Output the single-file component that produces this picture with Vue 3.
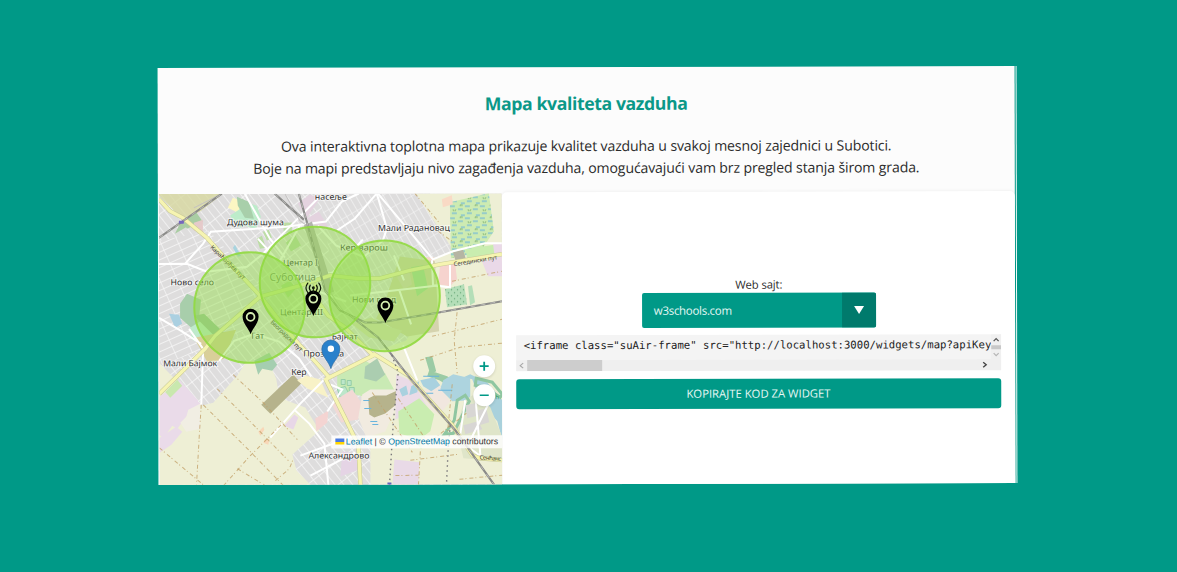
<script setup>
const zones = [
  { x: 249.5, y: 306.8 },
  { x: 315, y: 281.5 },
  { x: 384.5, y: 295.5 },
]
const pins = [
  { x: 250.5, y: 333.5 },
  { x: 313.3, y: 315.5 },
  { x: 385.3, y: 322.5 },
]
const labels = [
  { t: 'насеље', x: 315, y: 199.3, w: 32 },
  { t: 'Дудова шума', x: 227, y: 224.5, w: 57 },
  { t: 'Мали Радановац', x: 378, y: 230.5, w: 72 },
  { t: 'Кер варош', x: 340, y: 250, w: 48 },
  { t: 'Центар I', x: 283, y: 265, w: 35 },
  { t: 'Суботица', x: 269.5, y: 280, w: 46.5, big: true },
  { t: 'Ново село', x: 170.5, y: 284.5, w: 43.5 },
  { t: 'Центар III', x: 280, y: 314.5, w: 43 },
  { t: 'Нови град', x: 352, y: 302, w: 44 },
  { t: 'Гат', x: 251, y: 338, w: 13 },
  { t: 'Бајнат', x: 331.5, y: 339, w: 26 },
  { t: 'Прозивка', x: 303, y: 356, w: 41 },
  { t: 'Мали Бајмок', x: 163, y: 365.5, w: 54 },
  { t: 'Кер', x: 291, y: 374.5, w: 15.5 },
  { t: 'Александрово', x: 308, y: 458, w: 61 },
]
const majorRoads = [
  'M159 198l11 12 13 7 24 20 23 26 30 32 23 30 17 20 16 17 14 16',
  'M159 393l46-45 10-13 45-39 40-11 30-10 28 3h22l30-8 30-6 62-10',
  'M325 378l20 40 13 27 2 40',
  'M325 379l48-24-28-28-17-12-10-14 -3-18',
  'M373 353l35 22 17 20 27 30 20 30 7 3 23 2',
]
const rails = [
  'M159 237l63-44',
  'M275 193l14 13 15 13',
  'M299 193l9 32 17 65 15 20 25 12h15l60-10 62-11',
  'M350 315l28 22 32 41 45 52 39 55',
]
const tracks = [
  'M233 374l30 28 34 37 M217 388l35 35 36 37 M203 404l45 45 35 36',
  'M201 404l-2 30-3 51 M159 447l45 38 M223 485l25-28 22-22 15-15',
  'M237 468l28 17 M275 480l14-12 4-10',
  'M430 225l25 18 M415 193l24 29 M452 281l50-10 M432 336l25-6 45-11 M457 312l-3 28 3 33',
  'M420 360l40-13 42-4 M410 460l48-6 M420 451l-2 34 M395 475h23 M459 479l43-4 M452 384l-5 50 M372 392l40 60 M398 398l30 45 38-30',
]
const minor = [
  'M159 263h28l20 8 40-5 15-12 25-25 32-32',
  'M185 263l18-20 8-12 75-5 40-5 16-20 17-8',
  'M245 193l25 45 15 19 M258 238l18 20',
  'M159 317l22 13 20 13 M189 328l14 20-2 56',
  'M377 193l10 35-4 12-21 18 M377 193l-22 25-18 12',
  'M378 193l55 66 20-8 32-8h17 M432 260l1 25 17 2V263',
  'M394 255l10 25 M399 289l12 35 M350 295l90-10',
  'M219 360l15-20 20-7 25 8 20 17 12 18',
  'M295 410l14 13 15 20 4 42 M325 378l-25 25-30 34 M330 384l12 5-15 22',
  'M403 345l14 35 M300 455l55-20 M310 475l45-23',
  'M465 400l-6 40 20 15 M475 395l5 60 M490 400l-20 40',
  'M300 225l-20 35 23 20 30-8 30-33 M318 225l18 20 29 12 M291 310l25-20 30 11',
]
</script>

<template>
  <main class="page">
    <section class="card">
      <header class="intro">
        <h1>Mapa kvaliteta vazduha</h1>
        <p class="first">Ova interaktivna toplotna mapa prikazuje kvalitet vazduha u svakoj mesnoj zajednici u Subotici.</p>
        <p class="second">Boje na mapi predstavljaju nivo zagađenja vazduha, omogućavajući vam brz pregled stanja širom grada.</p>
      </header>
      <div class="content">
        <div class="map">
          <svg class="tiles" viewBox="159 193 343 292" preserveAspectRatio="none">
            <defs>
              <pattern id="st1" width="7" height="19" patternUnits="userSpaceOnUse" patternTransform="rotate(-38)">
                <path d="M0 0H7M0 0V19" stroke="#fff" stroke-width="1.4" stroke-opacity=".8" fill="none" />
              </pattern>
              <pattern id="st2" width="16" height="7" patternUnits="userSpaceOnUse" patternTransform="rotate(-24)">
                <path d="M0 0H16M0 0V7" stroke="#fff" stroke-width="1.3" stroke-opacity=".8" fill="none" />
              </pattern>
              <pattern id="st3" width="6" height="15" patternUnits="userSpaceOnUse" patternTransform="rotate(-30)">
                <path d="M0 0H6M0 0V15" stroke="#fff" stroke-width="1.2" stroke-opacity=".75" fill="none" />
              </pattern>
              <pattern id="trees" width="6" height="6" patternUnits="userSpaceOnUse">
                <circle cx="1.5" cy="1.5" r=".7" fill="#68a878" /><circle cx="4.5" cy="4.5" r=".7" fill="#68a878" />
              </pattern>
              <pattern id="marsh" width="15" height="12" patternUnits="userSpaceOnUse">
                <path d="M0 2h5M8 5h5M2 9h5M11 11h4" stroke="#5faee0" stroke-width="1" />
                <path d="M10 2l1-2M12 2v-2M4 7l-1-2M5 7l1-2" stroke="#76a968" stroke-width=".8" />
              </pattern>
            </defs>
            <rect x="159" y="193" width="343" height="292" fill="#dedddd" />
            <rect x="159" y="193" width="343" height="292" fill="url(#st1)" />
            <path d="M320 193h110l30 60-25 10-5 70-50-15-50-60z" fill="#dedddd" />
            <path d="M320 193h110l30 60-25 10-5 70-50-15-50-60z" fill="url(#st3)" />
            <path d="M159 240l50-10 60 65-30 40-80 30z" fill="#dedddd" />
            <path d="M159 240l50-10 60 65-30 40-80 30z" fill="url(#st2)" />

            <path d="M159 362l42 43 12-3 24-27 9-14 22-1 8 18 3 19 26 10 14 23-27 24 4 16 15 15H159z" fill="#eeefd5" />
            <path d="M416 193l38 58-21 7-2 43-25 39-34 12-17 18 7 30 8 16v69h132V193z" fill="#eeefd5" />
            <path d="M159 193h64l-23 18-18 7-23-24z" fill="#d7d8a0" opacity=".8" />
            <path d="M182 220l14-9 7 10-16 7zM187 226l-12 7 6-12z" fill="#a9cda3" />
            <path d="M194 222l9-3v13l-9-2z" fill="#e5caca" />
            <path d="M228 207l5-10 11 4-4 12z" fill="#fcf7c3" />
            <path d="M230 215l9-6 6-8 12 4 4 11-5 12-11-3-5 2z" fill="#bdecca" />
            <path d="M237 196l12 5 5 17-9-1-7-12z" fill="#a8cfaa" />
            <path d="M257 238l5-3 4 12-6 1zM263 231l6-2 3 8-5 3zM283 222h9v10h-8z" fill="#bcdda5" />
            <path d="M298 203l12-9 10 4-8 12-5 8zM307 218l12-7 9 15-6 3z" fill="#e4d3df" />
            <path d="M235 244l6 11-3 1-5-9z" fill="#a8d4df" />

            <path d="M180 303l7-10 14 6-2 17 8 14-8 4-19-17z" fill="#a8ceab" />
            <path d="M190 327l14-9 13 20-8 9-17-8z" fill="#bfeacb" />
            <path d="M169 313l10 1 3 9-7 4z" fill="#abd0e1" />
            <path d="M194 315l10-2 24 23-12 1z" fill="#9cc39c" />
            <path d="M194 337l42-8-12 29-16 5z" fill="#d9cf99" />

            <path d="M177 379l23 24-14 10-14-12z" fill="#eadbe9" />
            <path d="M172 398l-7-6 12-10 8 8z" fill="#c9e8ae" />
            <path d="M159 396l21-16 18 20-21 28-5-3-9 12-4-3z M159 437l17-11 6 5-11 13-12 8z" fill="#eadbe9" />
            <path d="M165 391l12-12 5 6-12 12z" fill="#c9e8ae" />
            <path d="M188 409l12-6v25l-14 3-6-9 6-6z" fill="#f1eee3" />
            <path d="M293 374l8 9-31 30-9-9z" fill="#b6b38c" />
            <path d="M254 360l15-8 8 12-5 6-10-2-4 6z" fill="#a5ceb0" />
            <path d="M298 417l-5 12-9-4 10-11z" fill="#e8d7e7" />
            <path d="M258 431l5-5 1 3-4 6zM264 439l5-1-1 6-5-2z" fill="#f8d7b8" />
            <path d="M328 397l-21-9-10-8 8-5 15 4z" fill="#f8f2c7" />
            <path d="M315 418l13-8-1 12-11 9z" fill="#f4d4d2" />

            <path d="M337 375l25-17 23 15 11 20-13 7-24-5-22-5z" fill="#c9eab4" />
            <path d="M365 366l12-8 8 16-9 7-12-3z" fill="#abcdb0" />
            <path d="M337 388l8-2 4 8-9 3zM347 380h4v5h-4zM349 387h5v6h-5zM341 379h4v5h-4z" fill="#bde6ca" stroke="#89c7a2" stroke-width=".8" />
            <path d="M336 399l16-10 9 13-3 17-17 3-9-17z" fill="#f2d9d5" />
            <path d="M362 394l8-5 27 0-1 17-11 25-19 6-8-20z" fill="#f1ebe0" />
            <path d="M368 398l6-3 12 0 11-5-1 14-11 9-11 4-5-3z" fill="#b6b38c" />
            <path d="M396 374l17 7 17 31-17-1-18 8z" fill="#eadbe7" />
            <path d="M398 411l21-13 15 16-4 17-8 6-1 12-10-12-12-4z" fill="#c9edb0" />
            <path d="M419 393l19-10 12 18-11 14-10-7z" fill="#f1e7df" />
            <path d="M394 459l25 3-1 23h-26z" fill="#e9dae7" />
            <path d="M342 451l14 2 3 16-19 7z" fill="#e5d4e5" />

            <path d="M450 202l39-9 5 38-14 21-29 6z" fill="#cdebb2" />
            <path d="M450 202l39-9 5 38-14 21-29 6z" fill="url(#marsh)" />
            <path d="M453 252l10-3 3 10-10 3z" fill="#b5b5a3" />
            <path d="M466 249l31-5-1 11-29 4z" fill="#c9edaf" />
            <path d="M493 243h9v33h-14l-6-15 13-2z" fill="#ead9e8" />
            <path d="M440 266l15-4 2 17-7 7-12-2z" fill="#f6d3ce" />
            <path d="M426 257h8v28h-7z" fill="#f4d9cc" />
            <path d="M445 289l19-5 3 20-20 3z" fill="#b4deb8" />
            <path d="M445 289l19-5 3 20-20 3z" fill="url(#trees)" />
            <path d="M468 286l4-1 3 17-5 3z" fill="#b4deb8" />
            <path d="M442 199l10-4 1 9-10 3z" fill="#f9dac5" />

            <path d="M400 256l35 5 4 70-32 5-31-18 10-20z" fill="#d5d3ae" />
            <path d="M411 267l12-2 5 23-11 8z" fill="#a8d8a0" />
            <path d="M397 277l12-7 3 14-8 5z" fill="#dcd2c0" />
            <path d="M351 323l20-6 20 10 11 3-8 11-25-4z" fill="#d8dcb8" />
            <path d="M281 285l9-5 6 8-8 9zM286 242l9-8 6 11-10 6z" fill="#b9d6a8" />

            <path d="M425 357l7-1 4 15-6 3zM429 370l18 6 11 8-4 5-15-9-12-4z" fill="#9bcba5" />
            <path d="M448 388l15-11 9 2 8 22 17 20 5 19V400l-15-18-17-8-20 9-10 3z" fill="#a9d1dc" />
            <path d="M443 380l10-6 17 4v22l-18 1-12-12z" fill="#add4df" />
            <path d="M420 380l14-3 6 8-9 6-8-5z M399 389l7-4 2 9-6 2z M411 386l8-5-2 11-8 3z" fill="#a9d1df" />
            <path d="M456 428l4-14 4-14 12-7 14 14 12 30v24l-39-3z" fill="#dfe5c9" />
            <path d="M457 400l8-5 4 6-8 16-8 16-9 1 10-14zM476 378l16 4 10 12-2 3-16-10-9-2z" fill="none" stroke="#8fc6a1" stroke-width="3" />
            <path d="M465 405l10-2 4 12-12 3zM478 410l8-2 3 14-10 3zM463 425l15-4 4 8-17 5z" fill="#d8d6d4" />
            <path d="M423 376h16M438 390h14M421 393h12M363 400h6M364 408h7M370 421h7M372 424h6" stroke="#68b4dd" stroke-width="1" />

            <path v-for="(d, i) in minor" :key="'m' + i" :d="d" fill="none" stroke="#fff" stroke-width="2" />
            <path d="M194 207l28-14M285 193l15 27 7 5 20 62 18 26" fill="none" stroke="#c3c1c1" stroke-width="1" />
            <path d="M304 225l8-4 10 32 12 38-7 3z" fill="#b3b3ae" />
            <path v-for="(d, i) in tracks" :key="'t' + i" :d="d" fill="none" stroke="#c3a169" stroke-width="1" stroke-dasharray="4 2 1 3" opacity=".8" />
            <path v-for="(d, i) in majorRoads" :key="'c' + i" :d="d" fill="none" stroke="#c9ca98" stroke-width="4.4" />
            <path v-for="(d, i) in majorRoads" :key="'y' + i" :d="d" fill="none" stroke="#f6f4b1" stroke-width="3.3" />
            <path v-for="(d, i) in rails" :key="'r' + i" :d="d" fill="none" stroke="#8b8b89" stroke-width="2.1" />
            <path v-for="(d, i) in rails" :key="'d' + i" :d="d" fill="none" stroke="#cececa" stroke-width=".7" stroke-dasharray="5 5" />
            <path d="M390 350l8 22-5 50-4 63M450 425l-2 20-2 40" fill="none" stroke="#79777b" stroke-width="1.4" stroke-dasharray="1.5 3.5" />
            <rect x="179" y="220" width="5" height="3" fill="#7566be" /><rect x="387" y="482" width="4" height="3" fill="#6161ba" />

            <g class="road-text">
              <text x="454" y="266" textLength="44" transform="rotate(-9 454 266)">Сегедински пут</text>
              <text x="210" y="247" textLength="46" transform="rotate(44 210 247)">Карађорђев пут</text>
              <text x="270" y="322" textLength="42" transform="rotate(44 270 322)">Београдски пут</text>
              <text x="479" y="459" textLength="22" transform="rotate(5 479 459)">Сенћанс</text>
              <text x="495" y="399" fill="#2c965b">h</text>
            </g>
            <text v-for="l in labels" :key="l.t" :x="l.x" :y="l.y" :textLength="l.w" lengthAdjust="spacingAndGlyphs" class="place" :class="{ big: l.big }">{{ l.t }}</text>
            <circle v-for="(z, i) in zones" :key="'z' + i" :cx="z.x" :cy="z.y" r="55.3" fill="#92df45" fill-opacity=".46" stroke="#91d940" stroke-width="2" stroke-opacity=".9" />

            <g v-for="(p, i) in pins" :key="'p' + i" :transform="`translate(${p.x} ${p.y})`">
              <path d="M0 0C-2-6-8-11-8-17.5a8 8 0 0 1 16 0C8-11 2-6 0 0z" fill="#000" />
              <circle cy="-17.3" r="3.9" fill="none" stroke="#d4edaf" stroke-width="1.8" />
            </g>
            <g fill="none" stroke="#10190a" stroke-width="1.2" stroke-linecap="round">
              <circle cx="313.3" cy="287.2" r="1.5" fill="#10190a" stroke="none" />
              <path d="M310.3 284.6q-2 2.8 0 5.5M316.3 284.6q2 2.8 0 5.5M307.8 282.5q-3.7 4.8 0 9.5M318.8 282.5q3.7 4.8 0 9.5M313.3 289v3" />
            </g>
            <path d="M330.7 368C328.7 361 321.7 356 321.7 348.5a9 9 0 0 1 18 0C339.7 356 332.7 361 330.7 368z" fill="#2a81cb" stroke="#326fa6" stroke-width=".8" />
            <circle cx="330.7" cy="348.2" r="3.2" fill="#fff" />
          </svg>
          <div class="zoom-buttons">
            <button aria-label="+"><svg width="22" height="22"><path d="M6.500 11h9M11 6.500v9" stroke="#009987" stroke-width="1.8" /></svg></button>
            <button aria-label="−"><svg width="22" height="22"><path d="M6.500 11h9" stroke="#009987" stroke-width="1.6" /></svg></button>
          </div>
          <div class="credits"><i class="flag"></i><a>Leaflet</a> | © <a>OpenStreetMap</a> contributors</div>
        </div>
        <div class="panel">
          <label>Web sajt:</label>
          <div class="select"><span>w3schools.com</span><b><svg width="10" height="9"><path d="M0 .5h10L5 8.5z" fill="#fff" /></svg></b></div>
          <div class="code">
            <code>&lt;iframe class="suAir-frame" src="http://localhost:3000/widgets/map?apiKey</code>
            <div class="vbar">
              <svg width="10" height="25" fill="none">
                <path d="M2.500 7l2.500-2.500L7.500 7" stroke="#555" stroke-width="1.3" />
                <path d="M0 11h10v4H0z" fill="#c8c8c8" />
                <path d="M2.500 19L5 21.500 7.500 19" stroke="#b5b5b5" stroke-width="1.2" />
              </svg>
            </div>
            <div class="hbar">
              <svg width="11" height="11" fill="none"><path d="M7 3L4 5.500 7 8" stroke="#a8a8a8" stroke-width="1.2" /></svg>
              <i></i>
              <svg class="right" width="11" height="11" fill="none"><path d="M4 3l3 2.500L4 8" stroke="#444" stroke-width="1.4" /></svg>
            </div>
          </div>
          <button class="copy">KOPIRAJTE KOD ZA WIDGET</button>
        </div>
      </div>
    </section>
  </main>
</template>

<style>
body { background: #009987; overflow: hidden; }
</style>

<style scoped>
.page { box-sizing: border-box; width: 1177px; height: 572px; padding: 67px 0 0 158px; background: #009987; font-family: "Open Sans", "Noto Sans", sans-serif; color: #2b2b2b; }
.card { position: relative; width: 857px; height: 417px; background: #fcfcfc; transform: rotate(-.12deg); }
.card::after { content: ""; position: absolute; left: 858px; top: 0; width: 1px; height: 417px; background: #effaf8; }
.intro { height: 125.5px; text-align: center; box-sizing: border-box; padding-top: 23px; }
h1 { margin: 0; font-size: 17.7px; line-height: 26px; font-weight: 700; color: #0b9888; letter-spacing: -.42px; }
p { margin: 0; font-size: 14.1px; line-height: 22px; white-space: nowrap; }
.first { margin-top: 18.5px; letter-spacing: -.135px; }
.second { letter-spacing: -.135px; }
.content { display: flex; height: 291.5px; }
.map { position: relative; width: 343px; margin-left: .5px; height: 291.5px; overflow: hidden; flex: none; }
.tiles { display: block; width: 343px; height: 292px; }
.place { font: 8.5px "Noto Sans", sans-serif; fill: #303030; stroke: #fff; stroke-opacity: .7; stroke-width: 1.7px; paint-order: stroke; }
.place.big { font-size: 10.5px; fill: #57575c; }
.road-text { font: 6px "Noto Sans", sans-serif; fill: #44443b; }
.zoom-buttons { position: absolute; right: 7px; top: 162px; display: grid; gap: 7px; }
.zoom-buttons button { width: 22px; height: 22px; padding: 0; border: 0; border-radius: 50%; background: #fff; box-shadow: 0 1px 3px #0002; }
.zoom-buttons svg { display: block; }
.credits { position: absolute; right: 0; top: 242px; height: 13px; width: 171px; box-sizing: border-box; padding: 0 4px; background: #ffffffd0; font: 8.75px/12px "Liberation Sans", sans-serif; white-space: nowrap; color: #333; }
.credits a { color: #0078a8; }
.flag { display: inline-block; width: 9px; height: 6px; margin-right: 2px; background: linear-gradient(#4c7be1 0 50%, #ffd500 50%); }
.panel { flex: 1; min-width: 0; box-sizing: border-box; margin-top: -1px; padding: 85px 14px 0; background: #fff; border-radius: 5px 5px 0 0; box-shadow: 0 -1px 3px #0000000b; display: flex; flex-direction: column; align-items: center; }
label { height: 16px; font-size: 11.3px; line-height: 15px; letter-spacing: -.12px; margin-left: 1px; }
.select { width: 234px; height: 35px; margin-left: 1px; display: flex; align-items: center; border-radius: 2px; background: #009987; color: #e7f8f5; overflow: hidden; font-size: 11.5px; letter-spacing: -.3px; }
.select span { flex: 1; padding-left: 12px; }
.select b { width: 34px; height: 35px; display: grid; place-items: center; background: #007a6c; }
.code { display: grid; grid-template: 25px 11px / 1fr 10px; width: 100%; height: 36px; margin-top: 7px; background: #f4f4f4; overflow: hidden; }
.code code { min-width: 0; padding-left: 8px; overflow: hidden; white-space: pre; font: 10.65px/21px "DejaVu Sans Mono", monospace; color: #222; }
.vbar { background: #f0f0f0; }
.hbar { grid-column: 1 / 3; display: flex; background: #efefef; }
.hbar i { width: 75px; background: #cdcdcd; }
.hbar .right { margin-left: auto; margin-right: 11px; }
.copy { width: 100%; height: 30px; margin-top: 8px; padding: 0; border: 0; border-radius: 3px; background: #009987; color: #e7f8f5; font: 11.3px "Open Sans", sans-serif; letter-spacing: 0; }
</style>
